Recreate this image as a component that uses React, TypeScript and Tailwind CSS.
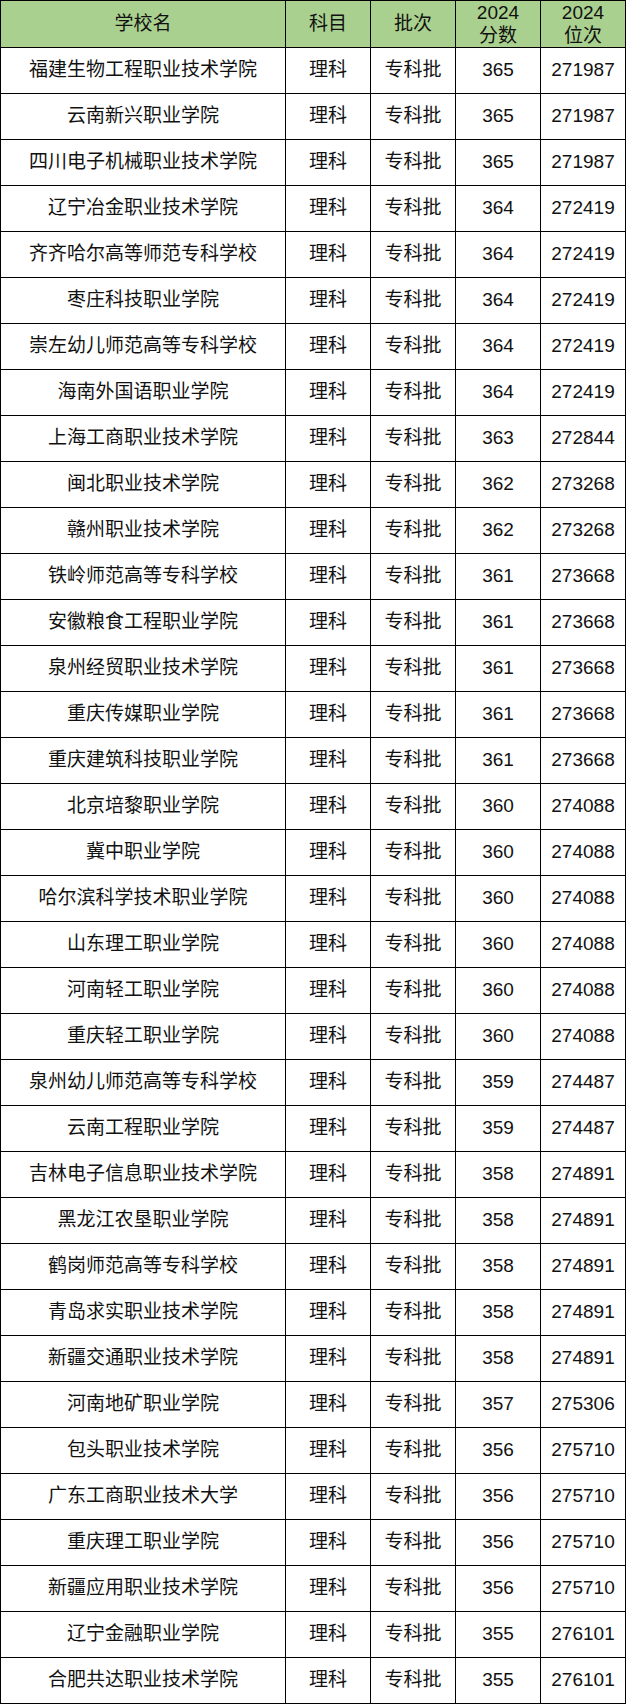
const rows: [string, string, string, number, number][] = [
  ["福建生物工程职业技术学院", "理科", "专科批", 365, 271987],
  ["云南新兴职业学院", "理科", "专科批", 365, 271987],
  ["四川电子机械职业技术学院", "理科", "专科批", 365, 271987],
  ["辽宁冶金职业技术学院", "理科", "专科批", 364, 272419],
  ["齐齐哈尔高等师范专科学校", "理科", "专科批", 364, 272419],
  ["枣庄科技职业学院", "理科", "专科批", 364, 272419],
  ["崇左幼儿师范高等专科学校", "理科", "专科批", 364, 272419],
  ["海南外国语职业学院", "理科", "专科批", 364, 272419],
  ["上海工商职业技术学院", "理科", "专科批", 363, 272844],
  ["闽北职业技术学院", "理科", "专科批", 362, 273268],
  ["赣州职业技术学院", "理科", "专科批", 362, 273268],
  ["铁岭师范高等专科学校", "理科", "专科批", 361, 273668],
  ["安徽粮食工程职业学院", "理科", "专科批", 361, 273668],
  ["泉州经贸职业技术学院", "理科", "专科批", 361, 273668],
  ["重庆传媒职业学院", "理科", "专科批", 361, 273668],
  ["重庆建筑科技职业学院", "理科", "专科批", 361, 273668],
  ["北京培黎职业学院", "理科", "专科批", 360, 274088],
  ["冀中职业学院", "理科", "专科批", 360, 274088],
  ["哈尔滨科学技术职业学院", "理科", "专科批", 360, 274088],
  ["山东理工职业学院", "理科", "专科批", 360, 274088],
  ["河南轻工职业学院", "理科", "专科批", 360, 274088],
  ["重庆轻工职业学院", "理科", "专科批", 360, 274088],
  ["泉州幼儿师范高等专科学校", "理科", "专科批", 359, 274487],
  ["云南工程职业学院", "理科", "专科批", 359, 274487],
  ["吉林电子信息职业技术学院", "理科", "专科批", 358, 274891],
  ["黑龙江农垦职业学院", "理科", "专科批", 358, 274891],
  ["鹤岗师范高等专科学校", "理科", "专科批", 358, 274891],
  ["青岛求实职业技术学院", "理科", "专科批", 358, 274891],
  ["新疆交通职业技术学院", "理科", "专科批", 358, 274891],
  ["河南地矿职业学院", "理科", "专科批", 357, 275306],
  ["包头职业技术学院", "理科", "专科批", 356, 275710],
  ["广东工商职业技术大学", "理科", "专科批", 356, 275710],
  ["重庆理工职业学院", "理科", "专科批", 356, 275710],
  ["新疆应用职业技术学院", "理科", "专科批", 356, 275710],
  ["辽宁金融职业学院", "理科", "专科批", 355, 276101],
  ["合肥共达职业技术学院", "理科", "专科批", 355, 276101],
];

const cell =
  "flex items-center justify-center border-r border-b border-black text-center";

export default function App() {
  return (
    <div className="w-[626px] bg-white font-['Liberation_Sans','Noto_Sans_CJK_SC',sans-serif] text-[19px] text-[#111]">
      <div className="border-l border-t border-black">
        {/* header */}
        <div className="grid h-[47px] grid-cols-[285px_85px_85px_85px_85px] bg-[#a9d08e]">
          <div className={cell}>学校名</div>
          <div className={cell}>科目</div>
          <div className={cell}>批次</div>
          <div className={`${cell} flex-col leading-[23px]`}>
            <span>2024</span>
            <span>分数</span>
          </div>
          <div className={`${cell} flex-col leading-[23px]`}>
            <span>2024</span>
            <span>位次</span>
          </div>
        </div>

        {rows.map((r) => (
          <div
            key={r[0]}
            className="grid h-[46px] grid-cols-[285px_85px_85px_85px_85px]"
          >
            <div className={cell}>{r[0]}</div>
            <div className={cell}>{r[1]}</div>
            <div className={cell}>{r[2]}</div>
            <div className={cell}>{r[3]}</div>
            <div className={cell}>{r[4]}</div>
          </div>
        ))}
      </div>
    </div>
  );
}
